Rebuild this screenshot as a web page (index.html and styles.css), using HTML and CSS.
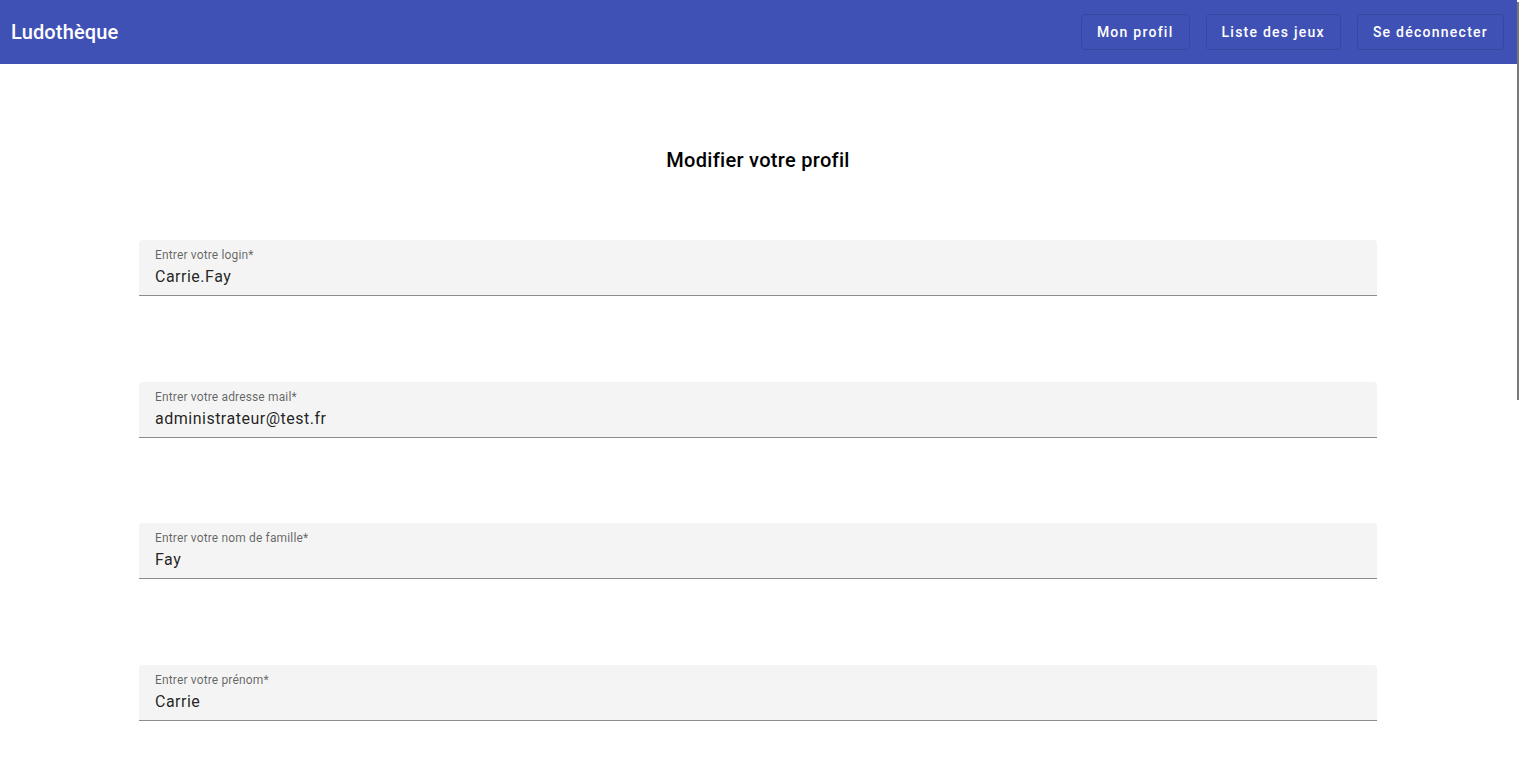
FILE: index.html
```html
<!DOCTYPE html>
<html lang="fr">
<head>
<meta charset="utf-8">
<title>Ludothèque</title>
<link rel="stylesheet" href="styles.css">
</head>
<body>
<div class="app">
  <header class="toolbar">
    <span class="brand">Ludothèque</span>
    <nav class="nav">
      <a class="btn">Mon profil</a>
      <a class="btn">Liste des jeux</a>
      <a class="btn">Se déconnecter</a>
    </nav>
  </header>
  <main class="content">
    <h2 class="title">Modifier votre profil</h2>
    <form class="form">
      <div class="field">
        <label class="label">Entrer votre login*</label>
        <div class="value">Carrie.Fay</div>
      </div>
      <div class="field">
        <label class="label">Entrer votre adresse mail*</label>
        <div class="value">administrateur@test.fr</div>
      </div>
      <div class="field">
        <label class="label">Entrer votre nom de famille*</label>
        <div class="value">Fay</div>
      </div>
      <div class="field">
        <label class="label">Entrer votre prénom*</label>
        <div class="value">Carrie</div>
      </div>
    </form>
  </main>
</div>
<div class="scroll-thumb"></div>
</body>
</html>
```
FILE: styles.css
```css
html, body {
  margin: 0;
  padding: 0;
  overflow: hidden;
  background: #fff;
  font-family: Roboto, "Helvetica Neue", sans-serif;
}
.app {
  width: calc(100% - 2px);
}
.toolbar {
  height: 64px;
  background: #3f51b5;
  color: #fff;
  display: flex;
  align-items: center;
  justify-content: space-between;
  padding: 0 13px 0 11px;
  box-sizing: border-box;
}
.brand {
  font-size: 20px;
  font-weight: 500;
  letter-spacing: 0.15px;
}
.nav {
  display: flex;
  gap: 16px;
  margin-top: -1px;
}
.btn {
  display: inline-flex;
  align-items: center;
  height: 36px;
  padding: 0 15px;
  border: 1px solid rgba(0, 0, 0, 0.12);
  border-radius: 4px;
  font-size: 14px;
  font-weight: 500;
  letter-spacing: 1.25px;
  color: #fff;
  box-sizing: border-box;
}
.content {
  padding: 0 140px 0 139px;
}
.title {
  margin: 80px 0 64px;
  text-align: center;
  font-size: 20px;
  font-weight: 500;
  letter-spacing: 0.3px;
  line-height: 32px;
  color: #000;
}
.form {
  display: flex;
  flex-direction: column;
  gap: 85.7px;
}
.field {
  height: 56px;
  background: #f4f4f4;
  border-radius: 4px 4px 0 0;
  border-bottom: 1px solid #8c8c8c;
  box-sizing: border-box;
  padding: 8px 16px 0;
}
.label {
  display: block;
  font-size: 12px;
  line-height: 14px;
  letter-spacing: 0.15px;
  color: rgba(0, 0, 0, 0.6);
}
.value {
  font-size: 16px;
  line-height: 22px;
  margin-top: 4px;
  letter-spacing: 0.5px;
  color: rgba(0, 0, 0, 0.87);
}
.scroll-thumb {
  position: fixed;
  right: 0;
  top: 2px;
  width: 2px;
  height: 398px;
  background: #787878;
}
```
